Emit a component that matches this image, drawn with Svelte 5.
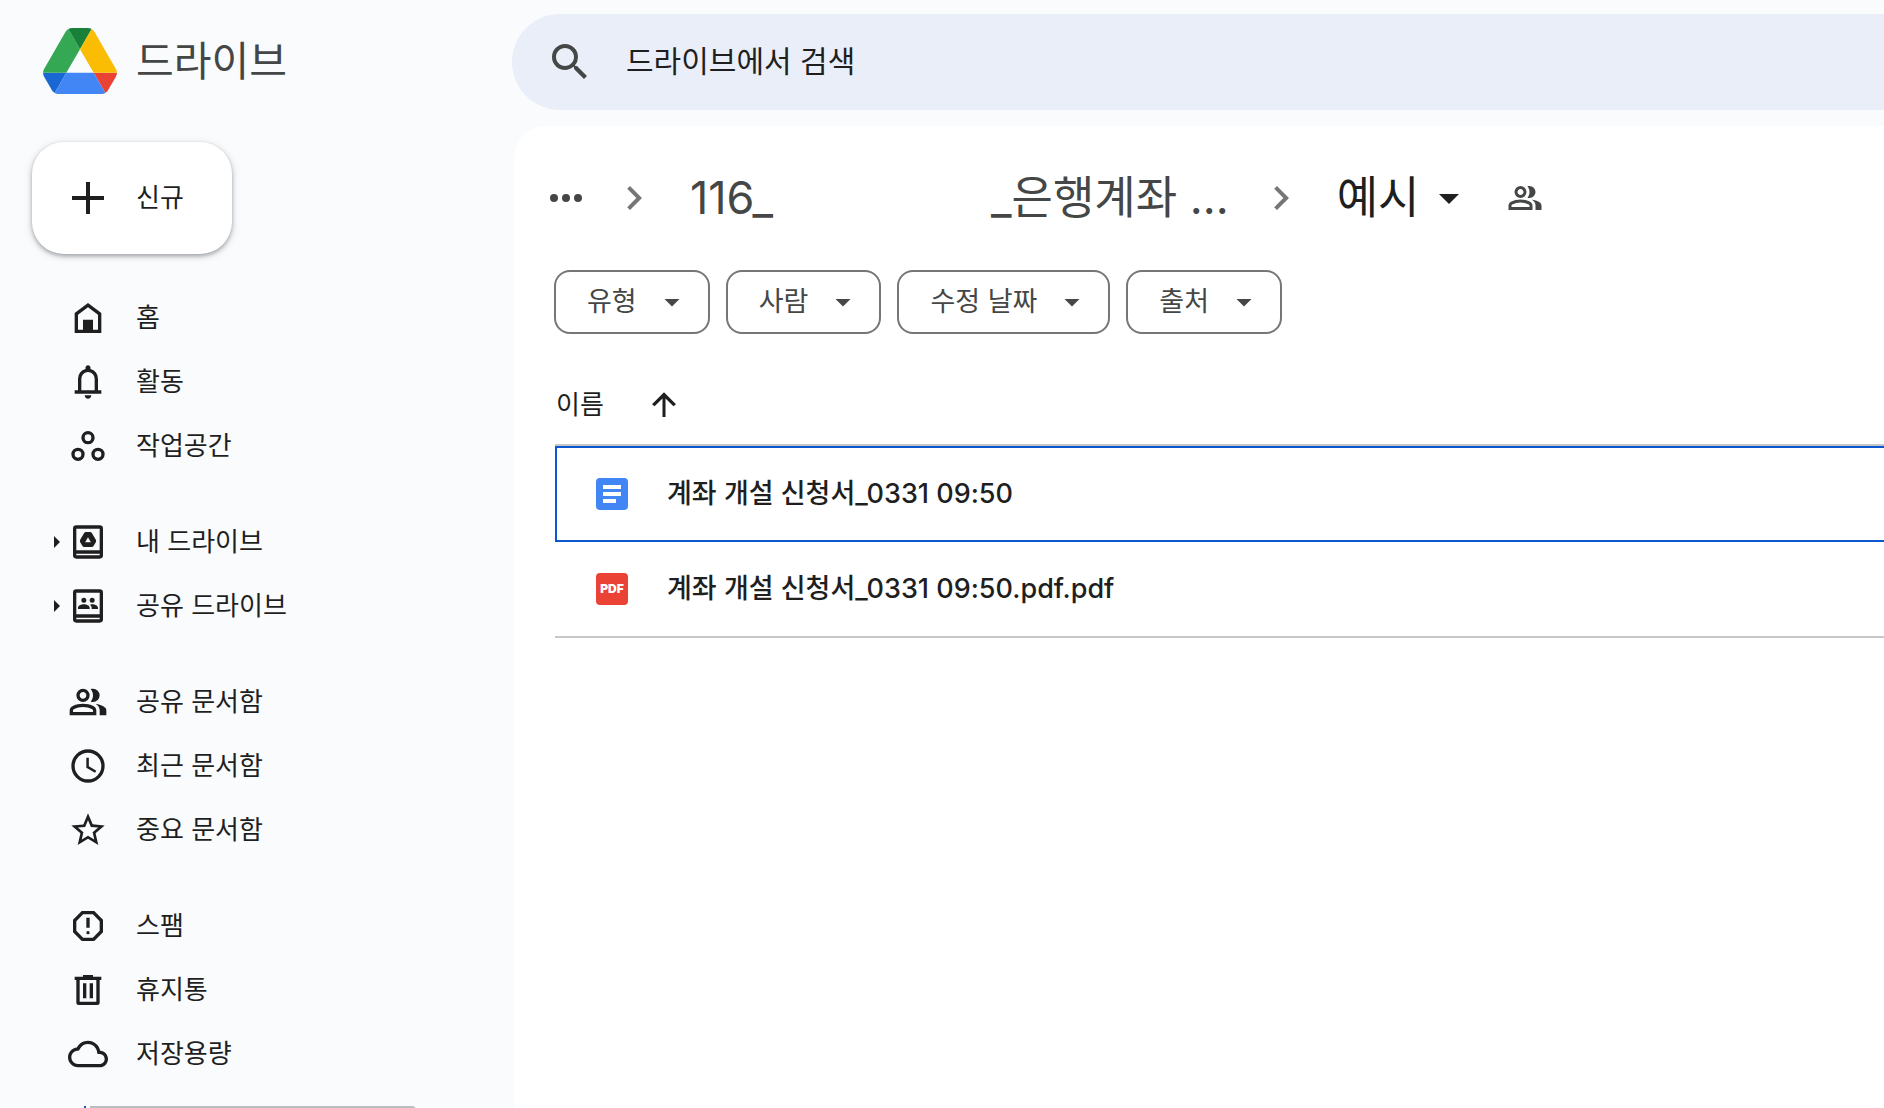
<script>
  const groups = [
    [
      { id: 'home', label: '홈' },
      { id: 'bell', label: '활동' },
      { id: 'spaces', label: '작업공간' }
    ],
    [
      { id: 'drive', label: '내 드라이브', expandable: true },
      { id: 'shared', label: '공유 드라이브', expandable: true }
    ],
    [
      { id: 'people', label: '공유 문서함' },
      { id: 'clock', label: '최근 문서함' },
      { id: 'star', label: '중요 문서함' }
    ],
    [
      { id: 'spam', label: '스팸' },
      { id: 'trash', label: '휴지통' },
      { id: 'cloud', label: '저장용량' }
    ]
  ];

  const icons = {
    home: 'M4 21V9l8-6 8 6v12zM6 19h3v-6h6v6h3v-9l-6-4.5L6 10z',
    bell: 'M4 19v-2h2v-7q0-2.075 1.25-3.687T10.5 4.2V3.5q0-.625.438-1.062T12 2q.625 0 1.063.438T13.5 3.5v.7q2 .5 3.25 2.113T18 10v7h2v2zM12 22q-.825 0-1.412-.587T10 20h4q0 .825-.587 1.413T12 22zM8 17h8v-7q0-1.65-1.175-2.825T12 6 9.175 7.175 8 10z',
    spaces: 'M12 3a4 4 0 1 1 0 8 4 4 0 0 1 0-8zm0 2a2 2 0 1 0 0 4 2 2 0 0 0 0-4zM6 13a4 4 0 1 1 0 8 4 4 0 0 1 0-8zm0 2a2 2 0 1 0 0 4 2 2 0 0 0 0-4zM18 13a4 4 0 1 1 0 8 4 4 0 0 1 0-8zm0 2a2 2 0 1 0 0 4 2 2 0 0 0 0-4z',
    drive: 'M5 2h14a2 2 0 0 1 2 2v16a2 2 0 0 1-2 2H5a2 2 0 0 1-2-2V4a2 2 0 0 1 2-2zM5 4v13h14V4zM5 19v1h14v-1zM9.7 15q-.7 0-1.1-.7l-1.3-2.2q-.4-.7 0-1.4l2.3-4q.4-.7 1.2-.7h2.4q.8 0 1.2.7l2.3 4q.4.7 0 1.4l-1.3 2.2q-.4.7-1.1.7zM12 9.1 10.3 12.1h3.4z',
    shared: 'M5 2h14a2 2 0 0 1 2 2v16a2 2 0 0 1-2 2H5a2 2 0 0 1-2-2V4a2 2 0 0 1 2-2zM5 4v13h14V4zM5 19v1h14v-1zM9.5 7a1.5 1.5 0 1 1 0 3 1.5 1.5 0 0 1 0-3zM14.5 7a1.5 1.5 0 1 1 0 3 1.5 1.5 0 0 1 0-3zM6 13.8v-.7c0-1.4 2-2.1 3.5-2.1s3.5.7 3.5 2.1v.7zM14.2 13.8v-.7c0-.8-.4-1.4-1-1.9.4-.1.9-.2 1.3-.2 1.5 0 3.5.7 3.5 2.1v.7z',
    people: 'M1 20v-2.8q0-.85.438-1.562T2.6 14.55q1.55-.775 3.15-1.163T9 13q1.65 0 3.25.388t3.15 1.162q.725.375 1.163 1.088T17 17.2V20zM19 20v-3q0-1.1-.613-2.113T16.65 13.15q1.275.15 2.4.513t2.1.887q.9.5 1.375 1.112T23 17v3zM9 12q-1.65 0-2.825-1.175T5 8q0-1.65 1.175-2.825T9 4q1.65 0 2.825 1.175T13 8q0 1.65-1.175 2.825T9 12zM19 8q0 1.65-1.175 2.825T15 12q-.275 0-.7-.063T13.6 11.8q.675-.8 1.037-1.775T15 8q0-1.05-.362-2.025T13.6 4.2q.35-.125.7-.163T15 4q1.65 0 2.825 1.175T19 8zM3 18h12v-.8q0-.275-.137-.5T14.5 16.35q-1.35-.675-2.725-1.012T9 15q-1.4 0-2.775.338T3.5 16.35q-.225.125-.363.35T3 17.2zM9 10q.825 0 1.413-.588T11 8q0-.825-.588-1.413T9 6q-.825 0-1.413.588T7 8q0 .825.588 1.413T9 10z',
    clock: 'M12 2a10 10 0 1 1 0 20 10 10 0 0 1 0-20zm0 2a8 8 0 1 0 0 16 8 8 0 0 0 0-16zM11 7h1.5v5.2l4.5 2.6-.8 1.3-5.2-3.1z',
    star: 'M22 9.24l-7.19-.62L12 2 9.19 8.63 2 9.24l5.46 4.73L5.82 21 12 17.27 18.18 21l-1.63-7.03zM12 15.4l-3.76 2.27 1-4.28-3.32-2.88 4.38-.38L12 6.1l1.71 4.04 4.38.38-3.32 2.88 1 4.28z',
    spam: 'M8.25 21 3 15.75v-7.5L8.25 3h7.5L21 8.25v7.5L15.75 21zM9.1 19h5.8l4.1-4.1V9.1L14.9 5H9.1L5 9.1v5.8zM11 7h2v6h-2zM12 15a1 1 0 1 1 0 2 1 1 0 0 1 0-2z',
    trash: 'M4 4h5V3h6v1h5v2h-1v13.5a1.5 1.5 0 0 1-1.5 1.5h-11A1.5 1.5 0 0 1 5 19.5V6H4zM7 6v13h10V6zM9 8h2v9H9zM13 8h2v9h-2z',
    cloud: 'M19.35 10.04C18.67 6.59 15.64 4 12 4 9.11 4 6.6 5.64 5.35 8.04 2.34 8.36 0 10.91 0 14c0 3.31 2.69 6 6 6h13c2.76 0 5-2.24 5-5 0-2.64-2.05-4.78-4.65-4.96zM19 18H6c-2.21 0-4-1.79-4-4 0-2.05 1.53-3.76 3.56-3.97l1.07-.11.5-.95C8.08 7.14 9.94 6 12 6c2.62 0 4.88 1.86 5.39 4.43l.3 1.5 1.53.11c1.56.1 2.78 1.41 2.78 2.96 0 1.65-1.35 3-3 3z',
    search: 'M15.5 14h-.79l-.28-.27A6.471 6.471 0 0 0 16 9.5 6.5 6.5 0 1 0 9.5 16c1.61 0 3.09-.59 4.23-1.57l.27.28v.79l5 4.99L20.49 19zM9.5 14C7.01 14 5 11.99 5 9.5S7.01 5 9.5 5 14 7.01 14 9.5 11.99 14 9.5 14z',
    chevron: 'M10 6 8.59 7.41 13.17 12l-4.58 4.59L10 18l6-6z',
    caret: 'M7 10l5 5 5-5z',
    more: 'M6 10a2 2 0 1 1 0 4 2 2 0 0 1 0-4zM12 10a2 2 0 1 1 0 4 2 2 0 0 1 0-4zM18 10a2 2 0 1 1 0 4 2 2 0 0 1 0-4z',
    up: 'M11 20V7.6l-5.3 5.3L4 11.5 12 3.5l8 8-1.7 1.4L13 7.6V20z',
    plus: 'M11 4h2v7h7v2h-7v7h-2v-7H4v-2h7z'
  };

  const filters = ['유형', '사람', '수정 날짜', '출처'];

  const files = [
    { type: 'doc', name: '계좌 개설 신청서_0331 09:50', selected: true },
    { type: 'pdf', name: '계좌 개설 신청서_0331 09:50.pdf.pdf', selected: false }
  ];
</script>

{#snippet icon(id, size)}
  <svg class="icon {size}" viewBox="0 0 24 24" aria-hidden="true">
    <path fill-rule="evenodd" d={icons[id]} />
  </svg>
{/snippet}

<div class="app">
  <aside class="sidebar">
    <a class="brand" href="#home">
      <svg class="logo" viewBox="0 0 87.3 78" aria-hidden="true">
        <path fill="#1967d2" d="m6.6 66.85 3.85 6.65c.8 1.4 1.95 2.5 3.3 3.3L27.5 53H0c0 1.55.4 3.1 1.2 4.5z" />
        <path fill="#34a853" d="M43.65 25 29.9 1.2c-1.35.8-2.5 1.9-3.3 3.3l-25.4 44A9.06 9.06 0 0 0 0 53h27.5z" />
        <path fill="#ea4335" d="M73.55 76.8c1.35-.8 2.5-1.9 3.3-3.3l1.6-2.75 7.65-13.25c.8-1.4 1.2-2.95 1.2-4.5H59.8z" />
        <path fill="#188038" d="M43.65 25 57.4 1.2C56.05.4 54.5 0 52.9 0H34.4c-1.6 0-3.15.45-4.5 1.2z" />
        <path fill="#4285f4" d="M59.8 53H27.5L13.75 76.8c1.35.8 2.9 1.2 4.5 1.2h50.8c1.6 0 3.15-.45 4.5-1.2z" />
        <path fill="#fbbc04" d="m73.4 26.5-12.7-22c-.8-1.4-1.95-2.5-3.3-3.3L43.65 25 59.8 53h27.45c0-1.55-.4-3.1-1.2-4.5z" />
      </svg>
      <span>드라이브</span>
    </a>

    <button class="new" type="button">
      {@render icon('plus', 'xl')}
      <span>신규</span>
    </button>

    <nav>
      {#each groups as group}
        <ul>
          {#each group as item}
            <li>
              <span class="expander" class:shown={item.expandable}></span>
              <a href="#{item.id}">
                {@render icon(item.id, 'lg')}
                <span>{item.label}</span>
              </a>
            </li>
          {/each}
        </ul>
      {/each}
    </nav>

    <div class="storage" role="meter" aria-label="저장용량" aria-valuemin="0" aria-valuemax="100" aria-valuenow="1">
      <span class="used"></span>
      <span class="free"></span>
    </div>
  </aside>

  <div class="content">
    <form class="search" role="search">
      <button type="submit" aria-label="검색">{@render icon('search', 'xl')}</button>
      <input type="search" placeholder="드라이브에서 검색" aria-label="드라이브에서 검색" />
    </form>

    <main>
      <div class="crumbs">
        <button type="button" aria-label="경로 더보기">{@render icon('more', 'xl')}</button>
        <span class="sep">{@render icon('chevron', 'xl')}</span>
        <a class="folder" href="#folder"><span>116_</span><span>_은행계좌 ...</span></a>
        <span class="sep last">{@render icon('chevron', 'xl')}</span>
        <button class="current" type="button">
          <span>예시</span>
          {@render icon('caret', 'xl')}
        </button>
        <button class="members" type="button" aria-label="공유됨">{@render icon('people', 'md')}</button>
      </div>

      <div class="filters">
        {#each filters as filter}
          <button type="button">
            <span>{filter}</span>
            {@render icon('caret', 'md')}
          </button>
        {/each}
      </div>

      <table>
        <thead>
          <tr>
            <th scope="col">
              <button type="button">
                <span>이름</span>
                {@render icon('up', 'md')}
              </button>
            </th>
          </tr>
        </thead>
        <tbody>
          {#each files as file}
            <tr class:selected={file.selected}>
              <td>
                <div class="file">
                  {#if file.type === 'doc'}
                    <svg class="filetype" viewBox="0 0 32 32" aria-hidden="true">
                      <rect width="32" height="32" rx="4" fill="#4285f4" />
                      <path fill="#fff" d="M7 7h18v4H7zM7 14h18v4H7zM7 21h13v4H7z" />
                    </svg>
                  {:else}
                    <span class="filetype pdf">PDF</span>
                  {/if}
                  <span>{file.name}</span>
                </div>
              </td>
            </tr>
          {/each}
        </tbody>
      </table>
    </main>
  </div>
</div>

<style>
  :global(body) {
    margin: 0;
    background: #f9fbfd;
  }

  .app {
    display: flex;
    height: 100vh;
    overflow: hidden;
    background: #f9fbfd;
    color: #1f1f1f;
    font-family: Inter, 'Noto Sans CJK KR', sans-serif;
    font-size: 26px;
    line-height: 40px;
  }

  button,
  input {
    margin: 0;
    padding: 0;
    border: 0;
    background: none;
    color: inherit;
    font: inherit;
  }

  button {
    display: flex;
    align-items: center;
    cursor: pointer;
  }

  a {
    color: inherit;
    text-decoration: none;
  }

  .icon {
    display: block;
    flex: none;
    fill: currentColor;
  }

  .md {
    width: 36px;
    height: 36px;
  }

  .lg {
    width: 40px;
    height: 40px;
  }

  .xl {
    width: 48px;
    height: 48px;
  }

  .sidebar {
    flex: none;
    width: 512px;
  }

  .brand {
    display: flex;
    align-items: center;
    gap: 19px;
    padding: 28px 0 0 43px;
    color: #444746;
    font-size: 41px;
  }

  .logo {
    display: block;
    width: 74px;
    height: 66px;
  }

  .new {
    gap: 24px;
    margin: 48px 0 32px 32px;
    padding: 32px 48px 32px 32px;
    border-radius: 32px;
    background: #fff;
    box-shadow:
      0 2px 4px rgba(60, 64, 67, 0.4),
      0 2px 8px rgba(60, 64, 67, 0.16);
  }

  nav {
    display: flex;
    flex-direction: column;
    gap: 32px;
  }

  ul {
    margin: 0;
    padding: 0;
    list-style: none;
  }

  li {
    display: flex;
    align-items: center;
    height: 64px;
    padding-left: 54px;
  }

  .expander {
    width: 6px;
    height: 12px;
    margin-right: 8px;
  }

  .expander.shown {
    background: #1f1f1f;
    clip-path: polygon(0 0, 100% 50%, 0 100%);
  }

  li a {
    display: flex;
    align-items: center;
    gap: 28px;
  }

  .storage {
    display: flex;
    gap: 4px;
    width: 332px;
    height: 8px;
    margin: 20px 0 0 84px;
  }

  .used {
    width: 2px;
    background: #0b57d0;
  }

  .free {
    flex: 1;
    border-radius: 0 4px 4px 0;
    background: #babcc0;
  }

  .content {
    display: flex;
    flex: 1;
    flex-direction: column;
    min-width: 0;
    padding-top: 14px;
  }

  .search {
    display: flex;
    align-items: center;
    gap: 32px;
    height: 96px;
    padding-left: 34px;
    border-radius: 48px 0 0 48px;
    background: #e9eef8;
    color: #444746;
    font-size: 30px;
  }

  .search input {
    flex: 1;
    min-width: 0;
    padding-bottom: 2px;
    outline: 0;
    color: #1f1f1f;
  }

  .search input::placeholder {
    color: #1f1f1f;
    opacity: 1;
  }

  main {
    flex: 1;
    margin: 16px 0 0 2px;
    border-radius: 32px 0 0 0;
    background: #fff;
  }

  .crumbs {
    display: flex;
    align-items: center;
    height: 144px;
    padding-left: 28px;
    color: #444746;
    font-size: 45px;
    white-space: nowrap;
  }

  .sep {
    margin: 0 32px 0 20px;
    color: #747775;
  }

  .sep.last {
    margin: 0 32px 0 28px;
  }

  .folder {
    display: flex;
    gap: 218px;
  }

  .current {
    gap: 6px;
    color: #1f1f1f;
  }

  .members {
    margin-left: 34px;
  }

  .filters {
    display: flex;
    gap: 16px;
    padding-left: 40px;
  }

  .filters button {
    gap: 17px;
    height: 64px;
    padding: 0 18px 0 31px;
    border: 2px solid #747775;
    border-radius: 16px;
    color: #444746;
    font-size: 27px;
  }

  table {
    width: calc(100% - 41px);
    margin: 32px 0 0 41px;
    border-collapse: separate;
    border-spacing: 0;
  }

  th {
    height: 78px;
    padding: 0;
    border-bottom: 2px solid #c7c7c7;
    font-weight: 400;
    text-align: left;
  }

  th button {
    gap: 42px;
    margin-left: 1px;
  }

  td {
    height: 94px;
    padding: 0 0 0 41px;
    border-bottom: 2px solid #c7c7c7;
    font-size: 27px;
    font-weight: 500;
  }

  .selected td {
    height: 92px;
    padding-left: 39px;
    border: 2px solid #0b57d0;
    border-right: 0;
  }

  .file {
    display: flex;
    align-items: center;
    gap: 39px;
  }

  .filetype {
    flex: none;
    width: 32px;
    height: 32px;
  }

  .pdf {
    border-radius: 4px;
    background: #ea4335;
    color: #fff;
    font-size: 12px;
    font-weight: 900;
    line-height: 32px;
    text-align: center;
  }
</style>
